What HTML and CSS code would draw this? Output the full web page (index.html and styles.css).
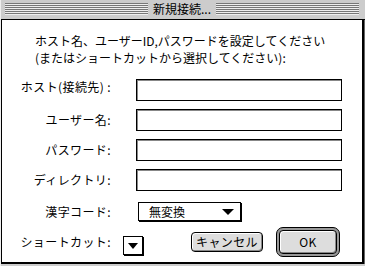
FILE: index.html
```html
<!doctype html>
<html lang="ja">

<head>
    <meta charset="utf-8">
    <title>新規接続...</title>
    <link rel="stylesheet" href="styles.css">
</head>

<body>
    <div class="window">
        <div class="titlebar">
            <div class="grip"></div>
            <div class="title">新規接続...</div>
            <div class="grip"></div>
        </div>
        <div class="content">
            <p class="message">ホスト名、ユーザーID,パスワードを設定してください<br>(またはショートカットから選択してください):</p>

            <div class="form">
                <label class="label label-host">ホスト(接続先) :</label>
                <div class="field"></div>

                <label class="label">ユーザー名:</label>
                <div class="field"></div>

                <label class="label">パスワード:</label>
                <div class="field"></div>

                <label class="label">ディレクトリ:</label>
                <div class="field"></div>

                <label class="label label-popup">漢字コード:</label>
                <div class="popup">
                    <span>無変換</span>
                    <span class="arrow"></span>
                </div>
            </div>

            <div class="footer">
                <span class="label">ショートカット:</span>
                <div class="popup popup-small"><span class="arrow"></span></div>
                <button class="btn btn-cancel">キャンセル</button>
                <div class="ok-ring"><button class="btn btn-ok">OK</button></div>
            </div>
        </div>
    </div>
</body>

</html>
```

FILE: styles.css
```css
/* base */
html,
body {
    margin: 0;
    padding: 0;
}

body {
    font-family: "Noto Sans CJK JP", "DejaVu Sans", sans-serif;
    font-size: 12px;
    color: #000;
    background: #ccc;
}

.window {
    width: 365px;
    height: 266px;
    display: flex;
    flex-direction: column;
    background: #ccc;
    box-sizing: border-box;
    border-left: 1px solid #eee;
}

/* title bar with grip stripes */
.titlebar {
    height: 20px;
    box-sizing: border-box;
    border-bottom: 1px solid #000;
    display: flex;
    align-items: center;
    gap: 4px;
    padding: 0 6px 1px 4px;
}

.grip {
    flex: 1;
    height: 12px;
    background: repeating-linear-gradient(#777 0 1px, #eee 1px 2px);
}

.title {
    line-height: 14px;
    padding: 0 1px;
}

/* dialog body */
.content {
    flex: 1;
    background: #fff;
    border-style: solid;
    border-color: #000;
    border-width: 0 2px 2px 1px;
    margin: 0 1px 2px 0;
    box-shadow: 1px 0 0 #666;
}

.message {
    margin: 12px 0 0 33px;
    line-height: 17px;
}

.form {
    display: grid;
    grid-template-columns: 109px 206px;
    grid-auto-rows: 22px;
    column-gap: 25px;
    row-gap: 8px;
    margin-top: 13px;
}

.label {
    text-align: right;
    align-self: center;
    line-height: 14px;
    white-space: nowrap;
    letter-spacing: 0.4px;
}

.label-host {
    align-self: start;
    margin-top: 1px;
}

.field {
    border: 1px solid #000;
    box-shadow: inset 1px 1px 0 #888;
}

.label-popup,
.form .popup {
    margin-top: 3px;
}

/* popup menus */
.popup {
    box-sizing: border-box;
    width: 103px;
    height: 19px;
    margin-left: 2px;
    border: 1px solid #000;
    box-shadow: 1px 1px 0 #000;
    display: flex;
    align-items: center;
    justify-content: space-between;
    padding: 0 6px 0 10px;
    background: #fff;
    line-height: 14px;
}

.arrow {
    width: 0;
    height: 0;
    border-left: 6px solid transparent;
    border-right: 6px solid transparent;
    border-top: 6px solid #000;
}

.popup-small {
    width: 20px;
    height: 19px;
    margin-left: 12px;
    margin-top: 7px;
    padding: 0;
    justify-content: center;
}

.popup-small .arrow {
    border-left-width: 5px;
    border-right-width: 5px;
    border-top-width: 6px;
}

/* bottom row */
.footer {
    display: flex;
    align-items: center;
    margin-top: 6px;
}

.footer .label {
    width: 109px;
}

.btn {
    font: inherit;
    color: #000;
    background: #ddd;
    border: 1px solid #000;
    border-radius: 4px;
    box-shadow: inset 1px 1px 0 #fff, inset -1px -1px 0 #888;
    padding: 0;
    line-height: 14px;
    letter-spacing: 0.4px;
}

.btn-cancel {
    width: 72px;
    height: 20px;
    margin-left: 48px;
}

.ok-ring {
    box-sizing: border-box;
    width: 64px;
    height: 30px;
    margin-left: 13px;
    border: 1px solid #000;
    border-radius: 7px;
    background: #999;
    padding: 2px;
    display: flex;
}

.btn-ok {
    flex: 1;
}
```
